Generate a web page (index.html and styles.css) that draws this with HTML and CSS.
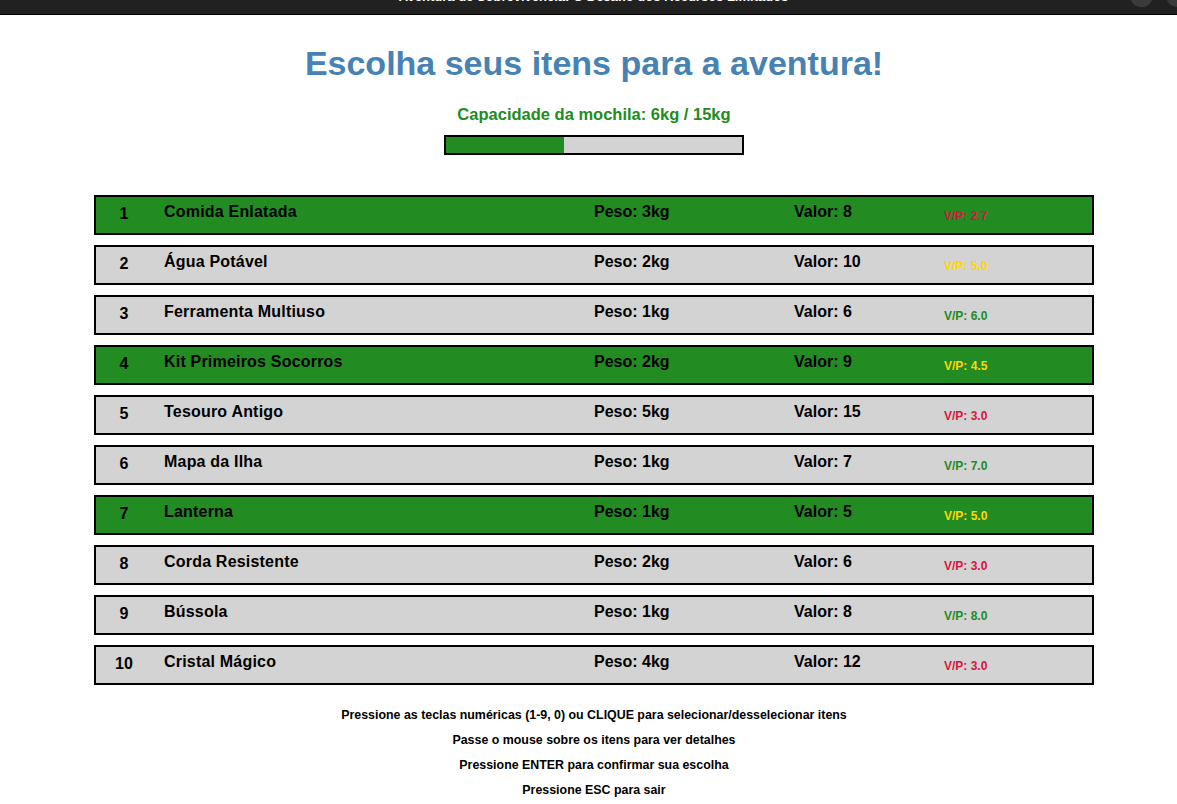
FILE: index.html
```html
<!DOCTYPE html>
<html lang="pt">
<head>
<meta charset="utf-8">
<title>Aventura</title>
<link rel="stylesheet" href="styles.css">
</head>
<body>
<div class="titlebar">
  <span class="wintitle">Aventura de Sobrevivência: O Desafio dos Recursos Limitados</span>
  <span class="winbtn btn-a"></span>
  <span class="winbtn btn-b"></span>
</div>
<main class="screen">
  <h1 class="heading">Escolha seus itens para a aventura!</h1>
  <p class="capacity">Capacidade da mochila: 6kg / 15kg</p>
  <div class="bar"><div class="bar-fill" style="width:40%"></div></div>

  <ul class="items">
    <li class="item selected"><span class="num">1</span><span class="name">Comida Enlatada</span><span class="peso">Peso: 3kg</span><span class="valor">Valor: 8</span><span class="vp bad">V/P: 2.7</span></li>
    <li class="item"><span class="num">2</span><span class="name">Água Potável</span><span class="peso">Peso: 2kg</span><span class="valor">Valor: 10</span><span class="vp mid">V/P: 5.0</span></li>
    <li class="item"><span class="num">3</span><span class="name">Ferramenta Multiuso</span><span class="peso">Peso: 1kg</span><span class="valor">Valor: 6</span><span class="vp good">V/P: 6.0</span></li>
    <li class="item selected"><span class="num">4</span><span class="name">Kit Primeiros Socorros</span><span class="peso">Peso: 2kg</span><span class="valor">Valor: 9</span><span class="vp mid">V/P: 4.5</span></li>
    <li class="item"><span class="num">5</span><span class="name">Tesouro Antigo</span><span class="peso">Peso: 5kg</span><span class="valor">Valor: 15</span><span class="vp bad">V/P: 3.0</span></li>
    <li class="item"><span class="num">6</span><span class="name">Mapa da Ilha</span><span class="peso">Peso: 1kg</span><span class="valor">Valor: 7</span><span class="vp good">V/P: 7.0</span></li>
    <li class="item selected"><span class="num">7</span><span class="name">Lanterna</span><span class="peso">Peso: 1kg</span><span class="valor">Valor: 5</span><span class="vp mid">V/P: 5.0</span></li>
    <li class="item"><span class="num">8</span><span class="name">Corda Resistente</span><span class="peso">Peso: 2kg</span><span class="valor">Valor: 6</span><span class="vp bad">V/P: 3.0</span></li>
    <li class="item"><span class="num">9</span><span class="name">Bússola</span><span class="peso">Peso: 1kg</span><span class="valor">Valor: 8</span><span class="vp good">V/P: 8.0</span></li>
    <li class="item"><span class="num">10</span><span class="name">Cristal Mágico</span><span class="peso">Peso: 4kg</span><span class="valor">Valor: 12</span><span class="vp bad">V/P: 3.0</span></li>
  </ul>

  <div class="help">
    <p>Pressione as teclas numéricas (1-9, 0) ou CLIQUE para selecionar/desselecionar itens</p>
    <p>Passe o mouse sobre os itens para ver detalhes</p>
    <p>Pressione ENTER para confirmar sua escolha</p>
    <p>Pressione ESC para sair</p>
  </div>
</main>
</body>
</html>
```
FILE: styles.css
```css
html, body {
  margin: 0;
  padding: 0;
  background: #ffffff;
  overflow: hidden;
}
body {
  font-family: "Liberation Sans", Arial, sans-serif;
  font-weight: bold;
  color: #000;
}
.titlebar {
  position: relative;
  height: 14px;
  background: #212121;
  border-bottom: 1px solid #000;
  overflow: hidden;
  display: flex;
  justify-content: center;
  align-items: flex-start;
}
.wintitle {
  color: #ffffff;
  font-size: 13px;
  line-height: 16px;
  margin-top: -11px;
  margin-left: 10px;
  white-space: nowrap;
}
.winbtn {
  position: absolute;
  top: -16px;
  width: 23px;
  height: 23px;
  border-radius: 50%;
  background: #3b3b3b;
}
.btn-a { left: 1130px; }
.btn-b { left: 1166px; }

.screen {
  width: 1188px;
  display: flex;
  flex-direction: column;
  align-items: center;
}
.heading {
  margin: 28px 0 0;
  font-size: 34px;
  line-height: 40px;
  color: #4682B4;
  font-weight: bold;
}
.capacity {
  margin: 21px 0 0;
  font-size: 16.5px;
  line-height: 20px;
  color: #228B22;
}
.bar {
  margin-top: 11px;
  width: 300px;
  height: 20px;
  box-sizing: border-box;
  border: 2px solid #000;
  background: #D3D3D3;
  display: flex;
}
.bar-fill {
  background: #228B22;
  height: 100%;
}
.items {
  list-style: none;
  margin: 40px 0 0;
  padding: 0;
  width: 1000px;
  display: flex;
  flex-direction: column;
  gap: 10px;
}
.item {
  box-sizing: border-box;
  height: 40px;
  border: 2px solid #000;
  background: #D3D3D3;
  display: flex;
  align-items: flex-start;
  white-space: nowrap;
}
.item.selected {
  background: #228B22;
}
.num {
  width: 56px;
  margin-right: 12px;
  text-align: center;
  font-size: 16px;
  line-height: 20px;
  padding-top: 7px;
}
.name, .peso, .valor {
  font-size: 16px;
  line-height: 20px;
  padding-top: 5px;
}
.name { width: 430px; letter-spacing: 0.2px; }
.peso { width: 200px; }
.valor { width: 150px; }
.vp {
  font-size: 12px;
  line-height: 16px;
  padding-top: 11px;
}
.vp.bad { color: #DC143C; }
.vp.mid { color: #FFD700; }
.vp.good { color: #228B22; }

.help {
  margin-top: 18px;
  text-align: center;
}
.help p {
  margin: 0;
  font-size: 12.4px;
  line-height: 25px;
}
```
